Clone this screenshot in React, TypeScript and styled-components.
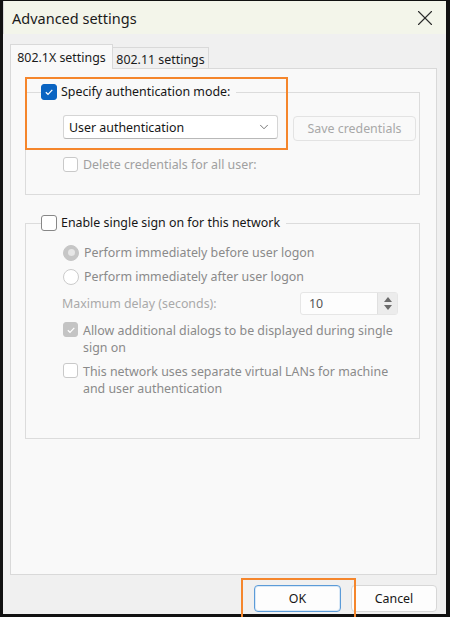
import { ChevronDown, X } from "lucide-react";
import styled, { createGlobalStyle } from "styled-components";

const GlobalStyle = createGlobalStyle`
  html, body {
    margin: 0;
    padding: 0;
    background: #ffffff;
  }
  * {
    box-sizing: border-box;
  }
`;

const Frame = styled.div`
  position: relative;
  width: 450px;
  height: 617px;
  border-style: solid;
  border-color: #111111;
  border-width: 1px 4px 3px 3px;
  background: #f0f0f0;
  display: flex;
  flex-direction: column;
  font-family: "Noto Sans", "DejaVu Sans", sans-serif;
  font-size: 12.4px;
  color: #1b1b1b;
`;

const TitleBar = styled.div`
  height: 33px;
  flex: none;
  display: flex;
  align-items: center;
  justify-content: space-between;
  padding: 0 8px 0 8px;
  background: #f3f5ea;
  border-left: 1px solid #d8d8d8;
`;

const Title = styled.span`
  font-size: 14.5px;
  color: #1a1a1a;
`;

const Body = styled.div`
  flex: 1;
  display: flex;
  flex-direction: column;
  padding: 10px 9px 1px 7px;
`;

const TabRow = styled.div`
  display: flex;
  align-items: flex-end;
  height: 25px;
  position: relative;
  z-index: 1;
  margin-bottom: -1px;
`;

const Tab = styled.div<{ $active?: boolean }>`
  height: ${(p) => (p.$active ? "25px" : "22px")};
  width: ${(p) => (p.$active ? "103px" : "97px")};
  display: flex;
  align-items: center;
  justify-content: center;
  background: ${(p) => (p.$active ? "#f9f9f9" : "#f0f0f0")};
  border: 1px solid #d9d9d9;
  border-bottom: ${(p) => (p.$active ? "none" : "1px solid #d9d9d9")};
  margin-left: ${(p) => (p.$active ? "0" : "-1px")};
  padding-top: ${(p) => (p.$active ? "0" : "2px")};
  font-size: 12.4px;
  color: #1b1b1b;
`;

const Panel = styled.div`
  height: 507px;
  flex: none;
  width: 427px;
  background: #f9f9f9;
  border: 1px solid #d9d9d9;
  padding: 15px 16px 0 14px;
  display: flex;
  flex-direction: column;
  gap: 20px;
`;

const Group = styled.fieldset`
  margin: 0;
  border: 1px solid #dcdcdc;
  padding: 0;
  min-width: 0;
`;

const GroupContent = styled.div<{ $gap: number; $top: number; $bottom: number }>`
  display: flex;
  flex-direction: column;
  gap: ${(p) => p.$gap}px;
  padding: ${(p) => p.$top}px 0 ${(p) => p.$bottom}px 37px;
`;

const Legend = styled.legend`
  margin-left: 15px;
  padding: 0 6px 0 0;
  height: 16px;
  display: flex;
  align-items: center;
  gap: 4px;
  font-size: 12.4px;
  color: #161616;
  line-height: 16px;
`;

const Box = styled.span<{ $checked?: boolean; $disabled?: boolean; $size?: number }>`
  width: ${(p) => p.$size ?? 15}px;
  height: ${(p) => p.$size ?? 15}px;
  flex: none;
  border-radius: 3px;
  display: inline-flex;
  align-items: center;
  justify-content: center;
  background: ${(p) =>
    p.$checked ? (p.$disabled ? "#c4c4c4" : "#0a64c2") : "#ffffff"};
  border: 1px solid
    ${(p) =>
      p.$checked ? (p.$disabled ? "#c4c4c4" : "#0a64c2") : p.$disabled ? "#c9c9c9" : "#878787"};
`;

function CheckBox({ checked, disabled, size }: { checked?: boolean; disabled?: boolean; size?: number }) {
  return (
    <Box $checked={checked} $disabled={disabled} $size={size}>
      {checked && (
        <svg width="10" height="10" viewBox="0 0 10 10">
          <polyline points="1.8,5.2 4,7.3 8.3,2.8" fill="none" stroke="#ffffff" strokeWidth="1.2" />
        </svg>
      )}
    </Box>
  );
}

const Radio = styled.span<{ $selected?: boolean }>`
  width: 16px;
  height: 16px;
  flex: none;
  border-radius: 50%;
  background: ${(p) => (p.$selected ? "#c6c6c6" : "#ffffff")};
  border: 1px solid ${(p) => (p.$selected ? "#c6c6c6" : "#cbcbcb")};
  display: inline-flex;
  align-items: center;
  justify-content: center;
  &::after {
    content: "";
    display: ${(p) => (p.$selected ? "block" : "none")};
    width: 7px;
    height: 7px;
    border-radius: 50%;
    background: #e6e6e6;
  }
`;

const Row = styled.div<{ $top?: boolean }>`
  display: flex;
  align-items: ${(p) => (p.$top ? "flex-start" : "center")};
  gap: 5px;
  min-height: 17px;
  line-height: 17px;
`;

const OptionText = styled.span<{ $tone?: string }>`
  color: ${(p) => p.$tone ?? "#8a8a8a"};
  font-size: 12.4px;
  width: 322px;
`;

const Select = styled.div`
  width: 215px;
  height: 24px;
  background: #ffffff;
  border: 1px solid #d5d5d5;
  border-bottom-color: #b8b8b8;
  border-radius: 3px;
  display: flex;
  align-items: center;
  justify-content: space-between;
  padding: 0 6px 0 5px;
  font-size: 12.4px;
  color: #161616;
`;

const GhostButton = styled.div`
  width: 123px;
  height: 25px;
  margin-top: 1px;
  border: 1px solid #e3e3e3;
  border-radius: 4px;
  background: #f9f9f9;
  display: flex;
  align-items: center;
  justify-content: center;
  color: #a8a8a8;
  font-size: 12.4px;
`;

const SelectRow = styled.div`
  display: flex;
  align-items: flex-start;
  gap: 15px;
`;

const DelayLabel = styled.span`
  width: 233px;
  flex: none;
  margin-left: -1px;
  color: #a9a9a9;
  font-size: 12.4px;
`;

const Spin = styled.div`
  width: 98px;
  height: 23px;
  display: flex;
  background: #fdfdfd;
  border: 1px solid #e6e6e6;
  border-radius: 3px;
`;

const SpinValue = styled.span`
  flex: 1;
  padding-left: 8px;
  display: flex;
  align-items: center;
  color: #555555;
  font-size: 12.4px;
`;

const SpinArrows = styled.div`
  width: 20px;
  display: flex;
  flex-direction: column;
  justify-content: center;
  align-items: center;
  gap: 3px;
  background: #ececec;
  border-left: 1px solid #e0e0e0;
`;

const Footer = styled.div`
  display: flex;
  justify-content: flex-end;
  gap: 10px;
  margin-top: 10px;
`;

const DialogButton = styled.div<{ $focused?: boolean }>`
  height: 27px;
  width: ${(p) => (p.$focused ? "87px" : "86px")};
  display: flex;
  align-items: center;
  justify-content: center;
  background: #fdfdfd;
  border: 1px solid ${(p) => (p.$focused ? "#5b9bd8" : "#d7d7d7")};
  box-shadow: ${(p) => (p.$focused ? "inset 0 0 0 1px #d9e8f6" : "none")};
  border-radius: 4px;
  font-size: 12.4px;
  color: #161616;
`;

const Highlight = styled.div<{ $x: number; $y: number; $w: number; $h: number }>`
  position: absolute;
  left: ${(p) => p.$x}px;
  top: ${(p) => p.$y}px;
  width: ${(p) => p.$w}px;
  height: ${(p) => p.$h}px;
  border: 2px solid #f5862c;
  pointer-events: none;
`;

function Arrow({ up }: { up?: boolean }) {
  return (
    <svg width="8" height="5" viewBox="0 0 8 5">
      <polygon points={up ? "0,5 4,0 8,5" : "0,0 8,0 4,5"} fill="#6b6b6b" />
    </svg>
  );
}

export default function App() {
  return (
    <>
      <GlobalStyle />
      <Frame>
        <TitleBar>
          <Title>Advanced settings</Title>
          <X size={26} strokeWidth={1.05} color="#2b2b2b" />
        </TitleBar>
        <Body>
          <TabRow>
            <Tab $active>802.1X settings</Tab>
            <Tab>802.11 settings</Tab>
          </TabRow>
          <Panel>
            <Group>
              <Legend>
                <CheckBox checked size={16} />
                Specify authentication mode:
              </Legend>
              <GroupContent $gap={15} $top={15} $bottom={21}>
                <SelectRow>
                  <Select>
                    User authentication
                    <ChevronDown size={14} strokeWidth={1.4} color="#5a5a5a" />
                  </Select>
                  <GhostButton>Save credentials</GhostButton>
                </SelectRow>
                <Row>
                  <CheckBox disabled />
                  <OptionText $tone="#a0a0a0">Delete credentials for all user:</OptionText>
                </Row>
              </GroupContent>
            </Group>
            <Group>
              <Legend>
                <CheckBox size={16} />
                Enable single sign on for this network
              </Legend>
              <GroupContent $gap={7} $top={13} $bottom={41}>
                <Row>
                  <Radio $selected />
                  <OptionText>Perform immediately before user logon</OptionText>
                </Row>
                <Row>
                  <Radio />
                  <OptionText>Perform immediately after user logon</OptionText>
                </Row>
                <Row>
                  <DelayLabel>Maximum delay (seconds):</DelayLabel>
                  <Spin>
                    <SpinValue>10</SpinValue>
                    <SpinArrows>
                      <Arrow up />
                      <Arrow />
                    </SpinArrows>
                  </Spin>
                </Row>
                <Row $top>
                  <CheckBox checked disabled />
                  <OptionText>Allow additional dialogs to be displayed during single sign on</OptionText>
                </Row>
                <Row $top>
                  <CheckBox disabled />
                  <OptionText>This network uses separate virtual LANs for machine and user authentication</OptionText>
                </Row>
              </GroupContent>
            </Group>
          </Panel>
          <Footer>
            <DialogButton $focused>OK</DialogButton>
            <DialogButton>Cancel</DialogButton>
          </Footer>
        </Body>
        <Highlight $x={22} $y={76} $w={263} $h={73} />
        <Highlight $x={238} $y={577} $w={115} $h={41} />
      </Frame>
    </>
  );
}
